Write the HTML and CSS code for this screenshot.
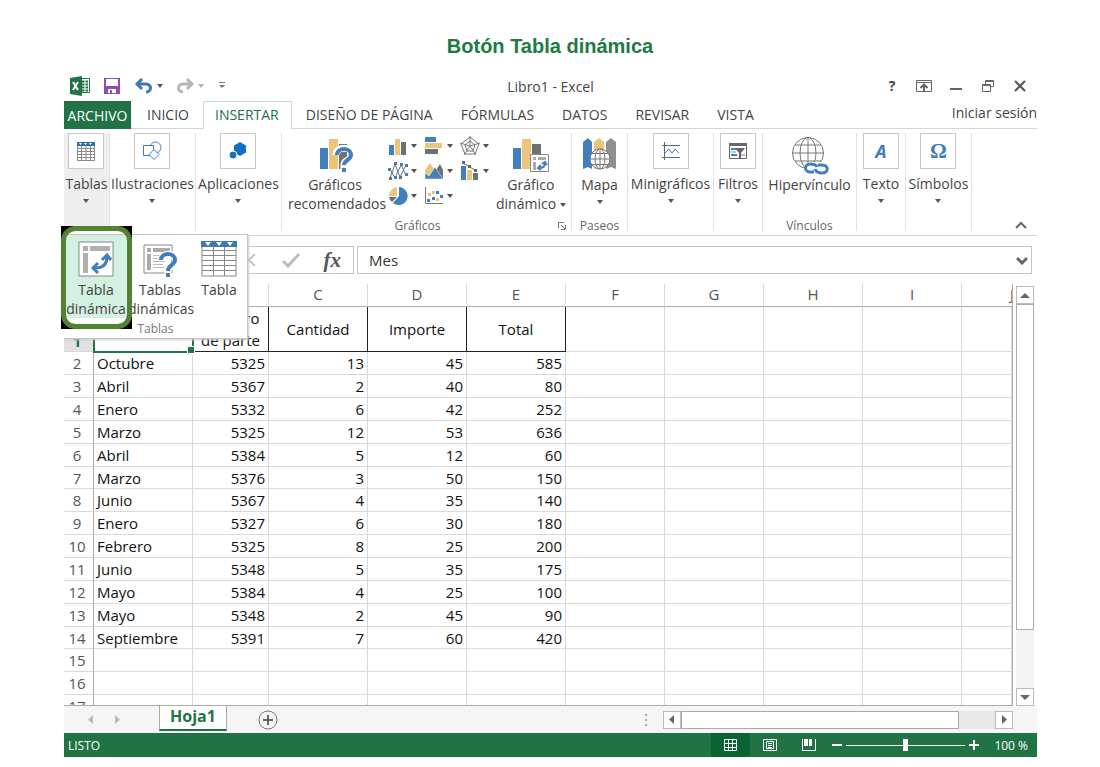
FILE: index.html
```html
<!DOCTYPE html>
<html lang="es">
<head>
    <meta charset="UTF-8">
    <meta name="viewport" content="width=device-width, initial-scale=1.0">
    <title>Botón Tabla dinámica</title>
    <link rel="stylesheet" href="styles.css">
</head>
<body>
    <h1>Botón Tabla dinámica</h1>
    <div class="app">
        <header class="titlebar">
            <div class="quick">
                <svg class="logo" width="20" height="20" viewBox="0 0 20 20"><path fill="#fff" stroke="#217346" d="M10 2.500h9.500v14H10z"/><path stroke="#217346" stroke-width="2" d="M12 5.500h2.500m1 0H18M12 8.500h2.500m1 0H18M12 11.500h2.500m1 0H18M12 14.500h2.500m1 0H18"/><path fill="#217346" d="M0 2L12 0v20L0 18z"/><path stroke="#fff" stroke-width="2" d="M3 6l5 8M8 6l-5 8"/></svg>
                <button class="tool save" aria-label="Guardar"><svg width="16" height="16" viewBox="0 0 16 16"><path fill="#8b4fae" d="M0 0h16v16H0z"/><path fill="#fff" d="M2 1h12v7H2zM4 11h8v4H4z"/><path fill="#8b4fae" d="M6 12h2v3H6z"/></svg></button>
                <button class="tool" aria-label="Deshacer"><svg width="18" height="16" viewBox="0 0 18 16"><path fill="none" stroke="#3d78b5" stroke-width="3" d="M2 6h9c6 0 6 8 0 8"/><path fill="none" stroke="#3d78b5" stroke-width="3" d="M7 1L2 6l5 5"/></svg></button>
                <span class="caret"></span>
                <button class="tool redo" aria-label="Rehacer"><svg width="18" height="16" viewBox="0 0 18 16"><path fill="none" stroke="#b5b5b5" stroke-width="3" d="M16 6H7c-6 0-6 8 0 8M11 1l5 5-5 5"/></svg></button>
                <span class="caret light"></span>
                <button class="tool custom" aria-label="Personalizar"><svg width="6" height="7" viewBox="0 0 6 7"><path fill="#777" d="M0 0h6v1H0zM0 3h6L3 6z"/></svg></button>
            </div>
            <div class="doc-name">Libro1 - Excel</div>
            <div class="window-buttons">
                <button aria-label="Ayuda"><b>?</b></button>
                <button aria-label="Opciones de la cinta"><svg width="16" height="12" viewBox="0 0 16 12"><path fill="none" stroke="#666" d="M.5.5h15v11H.5zM0 2.500h16"/><path fill="none" stroke="#666" stroke-width="2" d="M8 11V5M4.500 8L8 4.500 11.500 8"/></svg></button>
                <button aria-label="Minimizar"><svg width="12" height="12" viewBox="0 0 12 12"><path fill="#666" d="M0 8h12v2H0z"/></svg></button>
                <button aria-label="Restaurar"><svg width="12" height="12" viewBox="0 0 12 12"><path fill="none" stroke="#666" d="M3.500 4V.5h8v6H9M3 1.500h9M.5 4.500h8v7h-8zM0 5.500h9"/></svg></button>
                <button aria-label="Cerrar"><svg width="12" height="12" viewBox="0 0 12 12"><path stroke="#555" stroke-width="2" d="M1 1l10 10M11 1L1 11"/></svg></button>
            </div>
        </header>

        <nav class="tabs">
            <button class="tab file">ARCHIVO</button>
            <button class="tab">INICIO</button>
            <button class="tab active">INSERTAR</button>
            <button class="tab">DISEÑO DE PÁGINA</button>
            <button class="tab">FÓRMULAS</button>
            <button class="tab">DATOS</button>
            <button class="tab">REVISAR</button>
            <button class="tab">VISTA</button>
            <a class="login" href="#">Iniciar sesión</a>
        </nav>

        <div class="ribbon">
            <div class="group tables">
                <button class="boxed">
                    <span class="box"><svg width="20" height="20" viewBox="0 0 20 20"><path fill="#fff" stroke="#888" d="M1.500 1.500h17v18h-17zM1 7.500h18M1 10.500h18M1 13.500h18M1 16.500h18M5.500 4v15M10 4v15M14.500 4v15"/><path fill="#2f6cab" d="M1 1h18v4H1z"/><path fill="#fff" d="M3 2h3L4.500 4zM8 2h3L9.500 4zM13 2h3l-1.500 2z"/></svg></span>
                    Tablas<span class="caret"></span>
                </button>
                <div class="menu">
                    <div class="menu-items">
                        <button class="menu-item current"><svg width="36" height="36" viewBox="0 0 36 36"><path fill="#fff" stroke="#888" d="M1 1h34v34H1z"/><path fill="#b0b0b0" d="M5 5h5v5H5zM12 5h20v5H12zM5 12h5v20H5z"/><path fill="none" stroke="#447fbd" stroke-width="3" d="M17 27c8 0 12-4 12-11"/><path fill="none" stroke="#447fbd" stroke-width="3" d="M24 19l5-5 4 5M20 22l-5 5 5 5"/></svg>Tabla<br>dinámica</button>
                        <button class="menu-item"><svg width="36" height="36" viewBox="0 0 36 36"><path fill="#fff" stroke="#888" d="M2 4h28v28H2z"/><path fill="#aaa" d="M5 7h4v4H5zM11 7h17v4H11zM5 13h4v16H5z"/><path stroke="#bbb" d="M11 14.500h14M11 17.500h10M11 20.500h12M11 23.500h10M11 26.500h11"/><path fill="none" stroke="#fff" stroke-width="7" d="M19 20c0-9 15-9 15 0 0 5-8 5-8 9v7"/><path fill="none" stroke="#3f7dbb" stroke-width="4" d="M19 19c0-8 14-8 14 0 0 5-7 5-7 11"/><path fill="#3f7dbb" d="M24 32h4v4h-4z"/></svg>Tablas<br>dinámicas</button>
                        <button class="menu-item narrow"><svg width="36" height="36" viewBox="0 0 36 36"><path fill="#fff" stroke="#888" d="M1 1h34v34H1zM1 9.500h34M1 14.500h34M1 19.500h34M1 24.500h34M1 29.500h34M12.500 6v29M23.500 6v29"/><path fill="#3f77b3" d="M0 0h36v6H0z"/><path fill="#fff" d="M4 1h6L7 5zM15 1h6l-3 4zM26 1h6l-3 4z"/></svg>Tabla</button>
                    </div>
                    <div class="menu-title">Tablas</div>
                    <svg class="highlight" width="71" height="103" viewBox="0 0 71 103"><path fill-rule="evenodd" d="M0 0h71v103H0zM14 2h43q12 0 12 12v75q0 12-12 12H14q-12 0-12-12V14Q2 2 14 2z"/><rect x="2.500" y="2.500" width="66" height="98" rx="12" fill="none" stroke="#548235" stroke-width="5"/></svg>
                </div>
            </div>
            <div class="group pictures">
                <button class="boxed">
                    <span class="box"><svg width="20" height="20" viewBox="0 0 20 20"><g fill="#fff" stroke="#3f7dbb"><circle cx="13.500" cy="6.500" r="5.500"/><path d="M1.500 4.500h10v10h-10z"/><path d="M12 8.500l5 5-5 5-5-5z"/></g></svg></span>
                    Ilustraciones<span class="caret"></span>
                </button>
            </div>
            <div class="group apps">
                <button class="boxed">
                    <span class="box"><svg width="20" height="20" viewBox="0 0 20 20"><path fill="#0f70c6" d="M12 1l6 3.500v7L12 15l-6-3.500v-7z"/><circle cx="5" cy="14" r="4" fill="#0f70c6" stroke="#fff"/></svg></span>
                    Aplicaciones<span class="caret"></span>
                </button>
            </div>
            <div class="group charts">
                <div class="charts-row">
                    <button class="large recommended"><svg width="38" height="38" viewBox="-2 0 38 38"><path fill="#447fbd" d="M2 11h8v21H2z"/><path fill="#ecc57d" d="M11 2h9v30h-9z"/><path fill="#707070" d="M21 7h8v25h-8z"/><path fill="none" stroke="#fff" stroke-width="7" d="M18 18c0-9 16-9 16 0 0 5-8 5-8 9v10"/><path fill="none" stroke="#447fbd" stroke-width="4" d="M19 18c0-8 14-8 14 0 0 5-7 5-7 10"/><path fill="#447fbd" d="M24 31h4v4h-4z"/></svg>Gráficos<br>recomendados</button>
                    <div class="chart-grid">
                        <button aria-label="Columnas"><svg width="20" height="20" viewBox="0 0 20 20"><path fill="#447fbd" d="M1 9h5v10H1z"/><path fill="#ecc57d" d="M7 3h5v16H7z"/><path fill="#707070" d="M13 6h5v13h-5z"/></svg><span class="caret"></span></button>
                        <button aria-label="Barras"><svg width="20" height="20" viewBox="0 0 20 20"><path fill="#447fbd" d="M1 1h11v5H1z"/><path fill="#ecc57d" d="M1 7h17v5H1z"/><path fill="#707070" d="M1 13h13v5H1z"/></svg><span class="caret"></span></button>
                        <button aria-label="Radial"><svg width="20" height="20" viewBox="0 0 20 20"><path fill="none" stroke="#777" d="M10 1l9 7-4 10H5L1 8zM10 5l5 4-2 6H7L5 9zM10 0v10M20 7l-10 3 6 9M10 10l-6 9M10 10L0 7"/></svg><span class="caret"></span></button>
                        <button aria-label="Líneas"><svg width="20" height="20" viewBox="0 0 20 20"><path fill="none" stroke="#707070" d="M2 17L7 3l5 13 6-12"/><path fill="none" stroke="#447fbd" d="M2 8l5 9 6-13 5 10"/><path fill="#707070" d="M1 16h3v3H1zM6 1h3v3H6zM11 15h3v3h-3zM17 3h3v3h-3z"/><path fill="#447fbd" d="M0 7h3v3H0zM6 15h3v3H6zM12 2h3v3h-3zM17 12h3v3h-3z"/></svg><span class="caret"></span></button>
                        <button aria-label="Áreas"><svg width="20" height="20" viewBox="0 0 20 20"><path fill="#707070" d="M12 9l4-6 3 6v9h-5z"/><path fill="#ecc57d" d="M1 9l5-7 6 9-4 7H1z"/><path fill="#447fbd" stroke="#fff" stroke-width=".5" d="M1 18v-6l4 3 6-9 8 12z"/></svg><span class="caret"></span></button>
                        <button aria-label="Combinado"><svg width="20" height="20" viewBox="0 0 20 20"><path fill="#447fbd" d="M1 5h5v14H1z"/><path fill="#ecc57d" d="M7 9h5v10H7z"/><path fill="#707070" d="M13 12h5v7h-5z"/><path stroke="#666" fill="none" d="M3 2l7 4 6 4"/><path fill="#666" d="M2 0h3v3H2zM8 4h3v3H8zM14 8h3v3h-3z"/></svg><span class="caret"></span></button>
                        <button aria-label="Circular"><svg width="20" height="20" viewBox="0 0 20 20"><path fill="#447fbd" d="M11 1a9 9 0 1 1-6 16l6-7z"/><path fill="#ecc57d" d="M9 1v9H1a9 9 0 0 1 8-9z"/><path fill="#707070" d="M1 11h8l-5 5a8 8 0 0 1-3-5z"/></svg><span class="caret"></span></button>
                        <button aria-label="Dispersión"><svg width="20" height="20" viewBox="0 0 20 20"><path fill="none" stroke="#777" d="M1.500 1v16.500H19"/><path fill="#447fbd" d="M8 11h3v3H8zM12 5h3v3h-3zM16 9h3v3h-3zM3 13h3v3H3z"/><path fill="#ecc57d" d="M4 7h3v3H4zM8 5h3v3H8zM12 12h3v3h-3z"/></svg><span class="caret"></span></button>
                    </div>
                    <button class="large pivot-chart"><svg width="38" height="38" viewBox="0 0 38 38"><path fill="#447fbd" d="M1 11h8v21H1z"/><path fill="#ecc57d" d="M10 2h9v30h-9z"/><path fill="#707070" d="M20 7h9v12h-9z"/><path fill="#fff" stroke="#888" d="M18.500 17.500h18v17h-18z"/><path fill="#aaa" d="M21 20h3v3h-3zM26 20h8v3h-8zM21 25h3v8h-3z"/><path fill="none" stroke="#447fbd" stroke-width="2" d="M27 31c4 0 6-2 6-5M30 27l3-2 2 3M29 28l-3 3 3 2"/></svg>Gráfico<br>dinámico <span class="caret inline"></span></button>
                </div>
                <div class="group-title">Gráficos</div>
                <button class="launcher" aria-label="Más opciones de gráficos"><svg width="8" height="8" viewBox="0 0 8 8"><path fill="none" stroke="#777" d="M.5 6V.5H6M3 3l4 4M7.500 3v4.500H3"/></svg></button>
            </div>
            <div class="group maps">
                <button class="large"><svg width="38" height="38" viewBox="0 0 38 38"><path fill="#447fbd" d="M2 5l5-4 4 4v27l-4-2-5 2z"/><path fill="#ecc57d" d="M13 5l5-4 5 4v27l-5-2-5 2z"/><path fill="#909090" d="M25 5l5-4 5 4v27l-5-2-5 2z"/><g fill="#fff" stroke="#777"><circle cx="19" cy="22" r="10"/><ellipse cx="19" cy="22" rx="5" ry="10"/><path d="M19 12v20M9 22h20M11 16.500h16M11 27.500h16"/></g></svg>Mapa<span class="caret"></span></button>
                <div class="group-title">Paseos</div>
            </div>
            <div class="group sparklines">
                <button class="boxed">
                    <span class="box"><svg width="20" height="20" viewBox="0 0 20 20"><path fill="none" stroke="#666" d="M3.500 1v18M1 4.500h18M1 16.500h18"/><path fill="none" stroke="#447fbd" d="M4 12l4-4 3 4 3-4 4 4"/></svg></span>
                    Minigráficos<span class="caret"></span>
                </button>
            </div>
            <div class="group filters">
                <button class="boxed">
                    <span class="box"><svg width="20" height="20" viewBox="0 0 20 20"><path fill="#fff" stroke="#666" d="M1.500 2.500h17v15h-17z"/><path fill="#666" d="M1 2h18v3H1z"/><path fill="#447fbd" d="M3 7h6v2H3zM3 13h6v2H3z"/><path fill="#a8c7e4" d="M3 10h5v2H3zM12 13h5v2h-5z"/><path fill="#666" d="M7 7h10l-4 5v5h-2v-5z"/></svg></span>
                    Filtros<span class="caret"></span>
                </button>
            </div>
            <div class="group links">
                <button class="large"><svg width="38" height="38" viewBox="0 0 38 38"><g fill="none" stroke="#777"><circle cx="17" cy="16" r="15.500"/><ellipse cx="17" cy="16" rx="8" ry="15.500"/><path d="M17 0v32M1 16h32M4 8h26M4 24h26"/></g><rect x="13" y="25" width="25" height="13" rx="6" fill="#fff"/><g fill="none" stroke="#447fbd" stroke-width="3"><path d="M26 30c-1-3-4-3-7-3-6 0-6 8 0 8h4"/><path d="M24 32c1 3 4 4 7 4 7 0 7-8 0-8h-4"/></g></svg>Hipervínculo</button>
                <div class="group-title">Vínculos</div>
            </div>
            <div class="group text">
                <button class="boxed"><span class="box glyph slanted">A</span>Texto<span class="caret"></span></button>
            </div>
            <div class="group symbols">
                <button class="boxed"><span class="box glyph">Ω</span>Símbolos<span class="caret"></span></button>
            </div>
            <button class="collapse" aria-label="Contraer la cinta"><svg width="12" height="8" viewBox="0 0 12 8"><path fill="none" stroke="#666" stroke-width="2" d="M1 7l5-5 5 5"/></svg></button>
        </div>

        <div class="formula-bar">
            <input class="name-box" aria-label="Cuadro de nombres" value="A1">
            <div class="formula-buttons">
                <button aria-label="Cancelar"><svg width="14" height="14" viewBox="0 0 14 14"><path stroke="#c4c4c4" stroke-width="2" d="M1 1l12 12M13 1L1 13"/></svg></button>
                <button aria-label="Introducir"><svg width="18" height="16" viewBox="0 0 18 16"><path fill="none" stroke="#bdbdbd" stroke-width="3" d="M1 9l5 5L17 2"/></svg></button>
                <button class="fx" aria-label="Insertar función">fx</button>
            </div>
            <div class="formula">
                <input aria-label="Barra de fórmulas" value="Mes">
                <button aria-label="Expandir"><svg width="12" height="9" viewBox="0 0 12 9"><path fill="none" stroke="#666" stroke-width="3" d="M1 2l5 5 5-5"/></svg></button>
            </div>
        </div>

        <div class="sheet">
            <div class="cells">
                <table>
                    <colgroup><col class="col-num"><col><col class="col-part"><col><col><col><col><col><col><col><col class="col-rest"></colgroup>
                    <thead>
                        <tr><th></th><th>A</th><th>B</th><th>C</th><th>D</th><th>E</th><th>F</th><th>G</th><th>H</th><th>I</th><th class="cut"><span>J</span></th></tr>
                    </thead>
                    <tbody>
                        <tr class="heads"><th>1</th><td class="selected">Mes</td><td>Número<br>de parte</td><td>Cantidad</td><td>Importe</td><td>Total</td><td></td><td></td><td></td><td></td><td></td></tr>
                        <tr><th>2</th><td>Octubre</td><td>5325</td><td>13</td><td>45</td><td>585</td><td></td><td></td><td></td><td></td><td></td></tr>
                        <tr><th>3</th><td>Abril</td><td>5367</td><td>2</td><td>40</td><td>80</td><td></td><td></td><td></td><td></td><td></td></tr>
                        <tr><th>4</th><td>Enero</td><td>5332</td><td>6</td><td>42</td><td>252</td><td></td><td></td><td></td><td></td><td></td></tr>
                        <tr><th>5</th><td>Marzo</td><td>5325</td><td>12</td><td>53</td><td>636</td><td></td><td></td><td></td><td></td><td></td></tr>
                        <tr><th>6</th><td>Abril</td><td>5384</td><td>5</td><td>12</td><td>60</td><td></td><td></td><td></td><td></td><td></td></tr>
                        <tr><th>7</th><td>Marzo</td><td>5376</td><td>3</td><td>50</td><td>150</td><td></td><td></td><td></td><td></td><td></td></tr>
                        <tr><th>8</th><td>Junio</td><td>5367</td><td>4</td><td>35</td><td>140</td><td></td><td></td><td></td><td></td><td></td></tr>
                        <tr><th>9</th><td>Enero</td><td>5327</td><td>6</td><td>30</td><td>180</td><td></td><td></td><td></td><td></td><td></td></tr>
                        <tr><th>10</th><td>Febrero</td><td>5325</td><td>8</td><td>25</td><td>200</td><td></td><td></td><td></td><td></td><td></td></tr>
                        <tr><th>11</th><td>Junio</td><td>5348</td><td>5</td><td>35</td><td>175</td><td></td><td></td><td></td><td></td><td></td></tr>
                        <tr><th>12</th><td>Mayo</td><td>5384</td><td>4</td><td>25</td><td>100</td><td></td><td></td><td></td><td></td><td></td></tr>
                        <tr><th>13</th><td>Mayo</td><td>5348</td><td>2</td><td>45</td><td>90</td><td></td><td></td><td></td><td></td><td></td></tr>
                        <tr><th>14</th><td>Septiembre</td><td>5391</td><td>7</td><td>60</td><td>420</td><td></td><td></td><td></td><td></td><td></td></tr>
                        <tr><th>15</th><td></td><td></td><td></td><td></td><td></td><td></td><td></td><td></td><td></td><td></td></tr>
                        <tr><th>16</th><td></td><td></td><td></td><td></td><td></td><td></td><td></td><td></td><td></td><td></td></tr>
                        <tr><th>17</th><td></td><td></td><td></td><td></td><td></td><td></td><td></td><td></td><td></td><td></td></tr>
                    </tbody>
                </table>
            </div>
            <div class="vscroll">
                <button aria-label="Subir"><svg width="10" height="5" viewBox="0 0 10 5"><path fill="#666" d="M0 5l5-5 5 5z"/></svg></button>
                <div class="vthumb"></div>
                <div class="vtrack"></div>
                <button aria-label="Bajar"><svg width="10" height="5" viewBox="0 0 10 5"><path fill="#666" d="M0 0h10L5 5z"/></svg></button>
            </div>
        </div>

        <div class="sheet-bar">
            <div class="sheet-nav">
                <button aria-label="Hoja anterior"><svg width="5" height="9" viewBox="0 0 5 9"><path fill="#bbb" d="M5 0v9L0 4.500z"/></svg></button>
                <button aria-label="Hoja siguiente"><svg width="5" height="9" viewBox="0 0 5 9"><path fill="#bbb" d="M0 0v9l5-4.500z"/></svg></button>
            </div>
            <button class="sheet-tab">Hoja1</button>
            <button class="add-sheet" aria-label="Hoja nueva"><svg width="20" height="20" viewBox="0 0 20 20"><circle cx="10" cy="10" r="9" fill="none" stroke="#777"/><path stroke="#666" stroke-width="2" d="M10 5v10M5 10h10"/></svg></button>
            <svg class="grip" width="2" height="12" viewBox="0 0 2 12"><path fill="#aaa" d="M0 0h2v2H0zM0 5h2v2H0zM0 10h2v2H0z"/></svg>
            <div class="hscroll">
                <button aria-label="Izquierda"><svg width="5" height="9" viewBox="0 0 5 9"><path fill="#666" d="M5 0v9L0 4.500z"/></svg></button>
                <div class="hthumb"></div>
                <div class="htrack"></div>
                <button aria-label="Derecha"><svg width="5" height="9" viewBox="0 0 5 9"><path fill="#666" d="M0 0v9l5-4.500z"/></svg></button>
            </div>
        </div>

        <footer class="status">
            <span class="ready">LISTO</span>
            <button class="view on" aria-label="Normal"><svg width="13" height="12" viewBox="0 0 13 12"><path fill="none" stroke="#fff" d="M.5.5h12v11H.5zM4.500 0v12M8.500 0v12M0 4.500h13M0 8.500h13"/></svg></button>
            <button class="view" aria-label="Diseño de página"><svg width="14" height="12" viewBox="0 0 14 12"><path fill="none" stroke="#fff" d="M.5.5h13v11H.5zM3.500 2.500h7v7h-7zM5 4.500h4M5 6.500h4M5 8.500h4"/></svg></button>
            <button class="view" aria-label="Salto de página"><svg width="14" height="12" viewBox="0 0 14 12"><path fill="none" stroke="#fff" d="M.5 0v11.500h13V0"/><path fill="#fff" d="M2 0h4v7H2zM7 0h3v7H7z"/></svg></button>
            <button class="zoom-button" aria-label="Alejar"><svg width="10" height="10" viewBox="0 0 10 10"><path fill="#fff" d="M0 4h10v2H0z"/></svg></button>
            <input class="zoom" type="range" min="10" max="190" value="100" aria-label="Zoom">
            <button class="zoom-button" aria-label="Acercar"><svg width="10" height="10" viewBox="0 0 10 10"><path fill="#fff" d="M0 4h10v2H0zM4 0h2v10H4z"/></svg></button>
            <span class="percent">100 %</span>
        </footer>
    </div>
</body>
</html>
```

FILE: styles.css
```css
* {
    box-sizing: border-box;
}
body {
    margin: 0;
    background: #fff;
    color: #444;
    font-family: "Open Sans", "Noto Sans", sans-serif;
    font-size: 14px;
}
h1 {
    margin: 0;
    padding: 34px 0 14px;
    text-align: center;
    color: #217a42;
    font: bold 20px/24px "Liberation Sans", Arial, sans-serif;
}
button {
    padding: 0;
    border: none;
    background: none;
    color: inherit;
    font: inherit;
    cursor: pointer;
}
svg {
    display: block;
    flex: none;
}
.app {
    margin: 0 63px 0 64px;
}
.caret {
    display: block;
    width: 0;
    border: 3px solid transparent;
    border-top: 4px solid #555;
    border-bottom: none;
}
.caret.light {
    border-top-color: #b5b5b5;
}
.caret.inline {
    display: inline-block;
    vertical-align: middle;
}

/* title bar */
.titlebar {
    display: grid;
    grid-template-columns: 1fr auto 1fr;
    align-items: center;
    height: 29px;
}
.quick {
    display: flex;
    align-items: center;
    padding: 0 0 2px 6px;
}
.save {
    margin: 0 15px 0 14px;
}
.quick .caret {
    margin-left: 4px;
}
.redo {
    margin-left: 13px;
}
.custom {
    margin-left: 15px;
}
.window-buttons {
    display: flex;
    justify-content: flex-end;
    padding: 0 1px 2px 0;
}
.window-buttons button {
    display: flex;
    align-items: center;
    justify-content: center;
    width: 32px;
    height: 24px;
}

/* tabs */
.tabs {
    display: flex;
    height: 28px;
    border-bottom: 1px solid #d4d4d4;
}
.tab {
    height: 28px;
    padding: 0 14px 2px;
    white-space: nowrap;
}
.tab.file {
    width: 67px;
    padding: 0;
    margin-right: 2px;
    background: #217346;
    color: #fff;
}
.tab.active {
    padding: 0 12px 2px 11px;
    border: 1px solid #d4d4d4;
    border-bottom: none;
    background: #fff;
    color: #217346;
}
.login {
    margin-left: auto;
    color: #444;
    line-height: 24px;
    text-decoration: none;
}

/* ribbon */
.ribbon {
    display: flex;
    height: 107px;
    padding: 4px 0;
    border-bottom: 1px solid #d4d4d4;
}
.group {
    position: relative;
    display: flex;
    flex: none;
    flex-direction: column;
    align-items: center;
    border-right: 1px solid #e2e2e2;
    white-space: nowrap;
}
.tables {
    width: 46px;
    background: #eee;
}
.pictures,
.sparklines,
.apps {
    width: 86px;
}
.charts {
    width: 290px;
}
.maps {
    width: 56px;
}
.filters,
.text {
    width: 49px;
}
.links {
    width: 94px;
}
.symbols {
    width: 66px;
}
.boxed {
    display: flex;
    flex-direction: column;
    align-items: center;
    line-height: 19px;
}
.boxed .caret,
.maps .caret {
    margin-top: 6px;
}
.box {
    display: flex;
    align-items: center;
    justify-content: center;
    width: 36px;
    height: 36px;
    margin-bottom: 5px;
    border: 1px solid #c8c8c8;
    background: #fff;
}
.glyph {
    color: #3f7dbb;
    font: bold 21px "Liberation Serif", serif;
}
.slanted {
    font: italic bold 18px "Open Sans", sans-serif;
}
.large {
    line-height: 19px;
}
.large svg {
    margin: 4px auto 0;
}
.maps .large,
.maps .caret {
    margin-left: auto;
    margin-right: auto;
}
.group-title {
    margin: auto 0 -1px;
    color: #666;
    font-size: 12px;
    line-height: 12px;
}
.charts-row {
    display: flex;
    width: 100%;
    padding: 0 6px;
}
.recommended {
    width: 94px;
}
.chart-grid {
    display: grid;
    grid-template-columns: repeat(3, 36px);
    grid-auto-rows: 25px;
    margin-left: 6px;
}
.chart-grid button {
    display: flex;
    align-items: center;
    gap: 3px;
}
.pivot-chart {
    width: 72px;
}
.charts .group-title {
    padding-right: 18px;
}
.launcher {
    position: absolute;
    right: 5px;
    bottom: 1px;
}
.collapse {
    align-self: flex-end;
    margin: 0 10px 2px auto;
}

/* tables menu */
.menu {
    position: absolute;
    z-index: 2;
    top: 101px;
    left: 0;
    width: 184px;
    border: 1px solid #c6c6c6;
    border-left: none;
    background: #fff;
    box-shadow: 1px 1px 2px #ccc;
}
.menu-items {
    display: flex;
}
.menu-item {
    width: 64px;
    height: 83px;
    padding-top: 5px;
    line-height: 19px;
}
.menu-item svg {
    margin: 0 auto 3px;
}
.menu-item.narrow {
    width: 54px;
    padding-bottom: 19px;
}
.menu-item.current {
    background: #d3f0e0;
}
.menu-title {
    padding-top: 1px;
    color: #777;
    font-size: 12px;
    line-height: 19px;
    text-align: center;
}
.highlight {
    position: absolute;
    top: -9px;
    left: -3px;
}

/* formula bar */
.formula-bar {
    display: flex;
    gap: 3px;
    height: 28px;
    margin: 10px 5px 10px 0;
}
.name-box,
.formula-buttons,
.formula {
    border: 1px solid #c6c6c6;
}
.name-box {
    width: 160px;
}
.formula-buttons {
    display: flex;
    width: 127px;
}
.formula-buttons button {
    display: flex;
    flex: 1;
    align-items: center;
    justify-content: center;
}
.formula-buttons .fx {
    color: #555;
    font: italic bold 21px "Liberation Serif", serif;
}
.formula {
    display: flex;
    flex: 1;
    align-items: center;
    padding-right: 3px;
}
.formula input {
    flex: 1;
    padding: 0 11px;
    border: none;
    color: #333;
    font: inherit;
    font-size: 15px;
}

/* grid */
.sheet {
    display: flex;
    height: 422px;
}
.cells {
    flex: 1;
    overflow: hidden;
    border-right: 1px solid #ababab;
    border-bottom: 1px solid #ababab;
}
table {
    width: 100%;
    table-layout: fixed;
    border-collapse: separate;
    border-spacing: 0;
    font-size: 15px;
    line-height: 20px;
}
col {
    width: 99px;
}
.col-num {
    width: 30px;
}
.col-part {
    width: 76px;
}
.col-rest {
    width: auto;
}
th {
    padding: 0;
    border-right: 1px solid #d9d9d9;
    color: #555;
    font-weight: normal;
}
thead th {
    height: 23px;
    padding-bottom: 2px;
    border-bottom: 1px solid #ababab;
}
.cut {
    overflow: hidden;
    border-right: none;
    text-align: right;
}
.cut span {
    margin-right: -2px;
}
tbody th {
    border-right: 1px solid #ababab;
    border-bottom: 1px solid #d9d9d9;
    padding-right: 3px;
}
td {
    height: 23px;
    padding: 0 3px;
    border-right: 1px solid #d9d9d9;
    border-bottom: 1px solid #d9d9d9;
    color: #111;
    text-align: right;
    white-space: nowrap;
}
/* every seventh row is one pixel shorter at this zoom */
tbody tr:nth-child(7n) td {
    height: 22px;
}
td:nth-child(2) {
    text-align: left;
}
.heads td {
    height: 45px;
    line-height: 22px;
    text-align: center;
}
.heads td:nth-child(-n+6) {
    border-color: #222;
}
.heads th {
    background: #e1e1e1;
    color: #217346;
    font-weight: bold;
    vertical-align: bottom;
}
.heads .selected {
    position: relative;
    outline: 2px solid #217346;
    outline-offset: -1px;
}
.selected::after {
    content: "";
    position: absolute;
    right: -3px;
    bottom: -3px;
    width: 6px;
    height: 6px;
    border: 1px solid #fff;
    background: #217346;
}

/* scroll bars */
.vscroll {
    display: flex;
    flex-direction: column;
    width: 18px;
    margin: 2px 3px 0;
}
.vscroll button,
.hscroll button {
    display: flex;
    flex: none;
    align-items: center;
    justify-content: center;
    width: 18px;
    height: 18px;
    border: 1px solid #bbb;
    background: #fff;
}
.vthumb {
    flex: 327;
    border: 1px solid #ababab;
    background: #fff;
}
.vtrack {
    flex: 58;
    background: #f3f3f3;
}
.sheet-bar {
    display: flex;
    align-items: center;
    height: 27px;
    background: #f5f5f5;
}
.sheet-nav {
    display: flex;
    gap: 22px;
    width: 95px;
    padding-left: 24px;
}
.sheet-tab {
    align-self: flex-start;
    width: 68px;
    height: 25px;
    padding-bottom: 4px;
    border: 1px solid #ababab;
    border-top: none;
    border-bottom: 2px solid #217346;
    background: #fff;
    color: #217346;
    font-size: 16px;
    font-weight: bold;
    line-height: 18px;
}
.add-sheet {
    margin-left: 31px;
}
.grip {
    margin: 0 16px 0 auto;
}
.hscroll {
    display: flex;
    width: 36%;
    margin-right: 24px;
}
.hthumb {
    flex: 279;
    border: 1px solid #ababab;
    background: #fff;
}
.htrack {
    flex: 36;
    background: #e8e8e8;
}

/* status bar */
.status {
    display: flex;
    align-items: center;
    height: 24px;
    background: #217346;
    color: #fff;
    font-size: 12px;
}
.ready {
    margin: 0 auto 0 4px;
}
.view {
    display: flex;
    align-items: center;
    justify-content: center;
    width: 39px;
    height: 24px;
}
.view.on {
    background: #0a6332;
}
.zoom-button {
    margin: 0 4px;
}
.zoom {
    width: 119px;
    height: 12px;
    margin: 0;
    appearance: none;
    background: linear-gradient(#fff, #fff) center / 100% 1px no-repeat;
}
.zoom::-webkit-slider-thumb {
    appearance: none;
    width: 5px;
    height: 12px;
    background: #fff;
}
.percent {
    margin: 0 9px 0 11px;
}
```
